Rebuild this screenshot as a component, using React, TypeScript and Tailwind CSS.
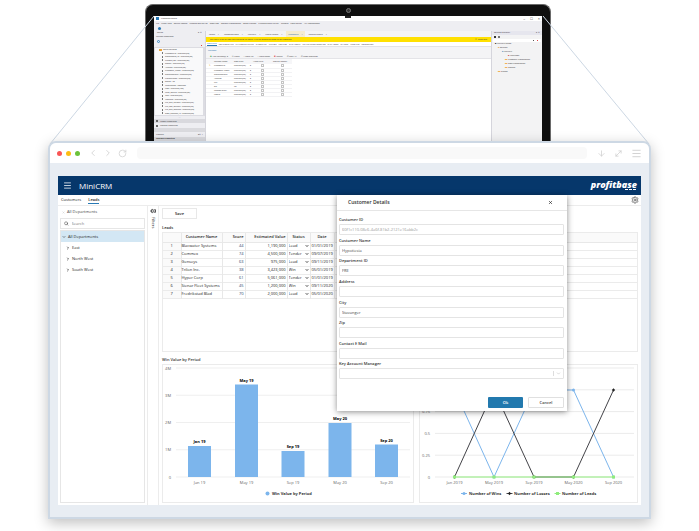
import React from "react";
import { Menu, Search, X, ChevronDown, ChevronLeft, ChevronRight, RotateCw, ArrowDown, Settings, Pin, MoveDiagonal } from "lucide-react";

const menuItems = ["File", "Client Apps", "Source Control", "Themes and Styling", "Data Flow", "Storage Management", "Smart Process", "Python/Extend Library", "Reports", "Local/Server", "API Management"];
const editorTabs = ["Forms", "InfoObject.wms", "MiniCRM", "Users/Actions", "Customers", "Logging Details"];
const subTabs = ["COLUMNS", "RELATIONSHIPS", "CHANGE TRACKING", "TIMESTAMP", "CUR SET", "POLICIES", "DATA SETUP", "TRANSACTION/STORAGE", "DATA POOL", "SHARED", "INDEXING", "REFERENCES"];
const treeColumns = ["CustomerID : nvarchar(50)", "Department_ID : nvarchar(50)", "Created_On : nvarchar(50)", "Report : nvarchar(50)", "Account : nvarchar(50)", "Customer_Name : nvarchar(50)", "DepartmentID : nvarchar(50)", "ProjectName : nvarchar(50)", "Status : int", "InvoiceDate : datetime", "Path : nvarchar(100)", "Lead_Source : nvarchar(50)", "Icon : nvarchar(50)", "Modified : nvarchar(50)", "File_one_column : nvarchar(50)", "File_two_column : nvarchar(50)", "File_one_address : nvarchar(50)", "Data_Connect_Id : nvarchar(50)"];
const dbRows = [["CustomerID", "nvarchar(50)"], ["Customer Name", "nvarchar(50)"], ["DepartmentID", "nvarchar(50)"], ["Address", "nvarchar(50)"], ["City", "nvarchar(50)"], ["Zip", "int"], ["Contact EMail", "nvarchar(50)"], ["KamID", "nvarchar(50)"]];

const leads = [
  ["1", "Blacwater Systems", "44", "1,190,000", "Lead", "01/01/2019"],
  ["2", "Commex", "74", "4,500,000", "Tender", "09/07/2019"],
  ["3", "Genseys", "63", "975,000", "Lead", "09/11/2019"],
  ["4", "Trilon Inc.", "38", "3,423,000", "Win", "05/01/2019"],
  ["5", "Hyper Corp", "61", "5,061,000", "Tender", "01/01/2019"],
  ["6", "Sienar Fleet Systems", "45", "1,200,000", "Win", "09/11/2020"],
  ["7", "Fredrikstad Blad", "70", "2,000,000", "Lead", "05/01/2020"],
];

const fields = [
  { id: "customer-id", label: "Customer ID", value: "60f1c110-08e6-4a6f-81b2-2121e16abb2c", disabled: true },
  { id: "customer-name", label: "Customer Name", value: "Hypotiesia" },
  { id: "department-id", label: "Department ID", value: "FRE" },
  { id: "address", label: "Address", value: "" },
  { id: "city", label: "City", value: "Stavanger" },
  { id: "zip", label: "Zip", value: "" },
  { id: "email", label: "Contact E Mail", value: "" },
];

function Laptop() {
  return (
    <div className="ml-[145px] mr-[148px] mt-1 flex h-[137px] flex-col overflow-hidden rounded-t-lg border-x border-t border-[#6a6a6a] bg-[#0f0f0f] px-2">
      <div className="flex h-[11px] shrink-0 items-center justify-center">
        <span className="size-[5px] rounded-full border border-[#777] bg-[#333]" />
      </div>
      <div className="relative flex min-h-0 flex-1 flex-col bg-[#eeeef2] text-[2px] leading-[3px] text-[#333]">
        <span className="absolute left-1/2 top-0 h-[2px] w-[6px] -translate-x-1/2 bg-[#222]" />
        <div className="flex h-[5px] shrink-0 items-center gap-[2px] bg-white px-[2px]">
          <span className="size-[3px] bg-[#2879b5]" />
          <span className="flex-1">Profitbase Studio</span>
          <span className="flex gap-[5px] text-[4px]"><i className="not-italic">–</i><i className="not-italic">□</i><i className="not-italic">×</i></span>
        </div>
        <nav className="flex h-[4px] shrink-0 items-center gap-[2px] px-[2px]">
          {menuItems.map((m) => <a key={m} href="#" className="whitespace-nowrap">{m}</a>)}
        </nav>
        <div className="flex h-[6px] shrink-0 items-center px-1"><span className="size-[3px] rounded-full bg-[#2879b5]" /></div>
        <div className="flex min-h-0 flex-1">
          <aside className="flex w-[51px] shrink-0 flex-col">
            <div className="flex h-[4px] justify-between px-[3px]"><span>Tables</span><span>▾ ⊟</span></div>
            <div className="h-[4px] px-[2px]">Column Templates</div>
            <div className="flex h-[4px] items-center px-[3px]"><span className="size-[3px] rounded-full border border-[#3b87c4]" /></div>
            <div className="flex h-[4px] items-center justify-end px-[3px]"><span className="size-px bg-[#d44]" /></div>
            <div className="flex h-[69px] shrink-0 flex-col border border-r-2 border-[#dcdce2] bg-[#f9f9fa]">
              <div className="flex flex-1 items-center gap-px pl-[4px]"><span className="h-[2px] w-[3px] bg-[#e8a33d]" />Table Columns</div>
              {treeColumns.map((t) => (
                <div key={t} className="flex flex-1 items-center gap-[2px] pl-[7px]"><span className="h-[2px] w-px bg-[#777]" />{t}</div>
              ))}
            </div>
            <div className="h-[3px] text-center">....</div>
            <div className="flex h-[4px] items-center gap-[2px] bg-[#d9d9de] px-[2px]"><span className="size-[2px] bg-[#666]" />Master Templates</div>
            <div className="flex h-[5px] items-center gap-[2px] px-[2px]"><span className="size-[2px] bg-[#666]" />Package Resources</div>
            <div className="h-[4px] bg-[#dadade]" />
            <div className="flex h-[5px] items-center justify-between px-[2px]"><span>Property</span><span>▾ ⊟ ×</span></div>
            <div className="h-[4px] bg-[#dadade] px-[2px] font-bold">Column Properties</div>
          </aside>
          <section className="flex min-w-0 flex-1 flex-col border-x border-[#d5d5dc] bg-[#f4f4f6]">
            <div className="flex h-[6px] shrink-0 items-center gap-[3px] pl-[2px]">
              {editorTabs.map((t) => (
                <span key={t} className={t === "Customers" ? "flex h-full items-center gap-[3px] bg-[#f5ecd0] px-[2px] text-[#1668a7]" : "flex items-center gap-[3px] px-px"}>{t}<i className="not-italic">×</i></span>
              ))}
            </div>
            <div className="flex h-[5px] shrink-0 items-center justify-between bg-[#ffe000] px-1"><span>The table is out of date and needs to be saved. Click to update the state of the database</span><span>↧ Check out</span></div>
            <div className="flex h-[5px] shrink-0 items-center gap-[2px] border-b border-[#e2e2e6] bg-white px-px">
              {subTabs.map((t) => <span key={t} className={t === "COLUMNS" ? "border-b border-[#2879b5] text-[#1668a7]" : ""}>{t}</span>)}
            </div>
            <div className="flex h-[7px] shrink-0 items-center px-[2px] text-[#1668a7]">Columns</div>
            <div className="flex h-[5px] shrink-0 items-center gap-[4px] border-b border-[#e4e4e8] px-[4px]">
              <span><b className="text-[#2a9b3e]">✚</b> Add Column(s) ▾</span><span>⟳ Clone</span><span>↑ Move Up</span><span>↓ Move Down</span><span><b className="text-[#d33]">✖</b> Delete</span><span>⎘ Copy All</span><span>⎘ Paste Definition</span>
            </div>
            <div className="min-h-0 flex-1 bg-white">
              <table className="w-[86px] table-fixed border-collapse text-left">
                <thead>
                  <tr className="h-[5px] bg-[#f6f6f8]"><th className="w-[8px] p-0" /><th className="w-[20px] p-0 font-normal">Column Name</th><th className="w-[19px] p-0 font-normal">Data Type</th><th className="w-[20px] p-0 font-normal">Allow Nulls</th><th className="p-0 font-normal">Replica Identity</th></tr>
                </thead>
                <tbody>
                  {dbRows.map(([n, t], i) => (
                    <tr key={n} className="h-[4px] border-b border-[#f2f2f4]">
                      <td className="p-0 pl-[3px] text-[#d99a2b]">{i === 0 ? "✎" : ""}</td>
                      <td className="p-0">{n}</td>
                      <td className="p-0"><span className="flex justify-between pr-[2px]"><span>{t}</span><span>▾</span></span></td>
                      <td className="p-0"><span className="ml-[8px] block size-[3px] border border-[#c4c4c4]" /></td>
                      <td className="p-0"><span className="ml-[8px] block size-[3px] border border-[#c4c4c4]" /></td>
                    </tr>
                  ))}
                </tbody>
              </table>
            </div>
          </section>
          <aside className="flex w-[50px] shrink-0 flex-col bg-[#f3f3f4]">
            <div className="flex h-[4px] justify-between bg-[#e6e6ee] px-[2px]"><span>Solution Explorer</span><span>▾ ⊟</span></div>
            <div className="flex h-[4px] items-center gap-[2px] px-[2px]"><span className="size-[2px] bg-[#333]" /><span className="size-[2px] bg-[#777]" /></div>
            <div className="mx-px flex h-[3px] items-center justify-end gap-[3px] bg-white px-[3px]"><span className="size-px bg-[#555]" /><span className="size-px bg-[#d44]" /></div>
            <div className="flex flex-col leading-[4px]">
              <span className="pl-[3px]"><b className="text-black">■</b> MiniCRM Demo</span>
              <span className="pl-[6px]"><b className="text-[#e8a33d]">■</b> Solution</span>
              <span className="pl-[10px]"><b className="text-[#4a90c8]">■</b> MiniCRM</span>
              <span className="pl-[16px]"><b className="text-[#c33]">■</b> Workbook</span>
              <span className="pl-[13px]"><b className="text-[#f09a1a]">■■</b> Customer Management</span>
              <span className="pl-[13px]"><b className="text-[#f09a1a]">■■</b> Data Management</span>
              <span className="pl-[13px]"><b className="text-[#f09a1a]">■■</b> Reports</span>
              <span className="pl-[6px]"><b className="text-[#f09a1a]">■■</b> System</span>
            </div>
          </aside>
        </div>
      </div>
    </div>
  );
}

function BrowserBar() {
  return (
    <div className="flex h-5 items-center rounded-t-md bg-white px-[7px]">
      <span className="size-[5px] rounded-full bg-[#f95555]" />
      <span className="ml-1 size-[5px] rounded-full bg-[#fdbd12]" />
      <span className="ml-1 size-[5px] rounded-full bg-[#6cc23a]" />
      <div className="ml-[8px] flex items-center gap-[5px] text-[#d0d0d0]">
        <button aria-label="Back"><ChevronLeft size={10} strokeWidth={2} /></button>
        <button aria-label="Forward"><ChevronRight size={10} strokeWidth={2} /></button>
        <button aria-label="Reload"><RotateCw size={9} strokeWidth={2} /></button>
      </div>
      <input aria-label="Address bar" className="mx-[10px] h-3 min-w-0 flex-1 rounded-sm bg-[#f9f9f9]" />
      <div className="flex items-center gap-[8px] text-[#cfcfcf]">
        <button aria-label="Download"><ArrowDown size={9} strokeWidth={2} /></button>
        <button aria-label="Expand"><MoveDiagonal size={9} strokeWidth={2} /></button>
        <button aria-label="Menu"><Menu size={11} strokeWidth={2} /></button>
      </div>
    </div>
  );
}

function Sidebar() {
  return (
    <aside className="flex w-[90px] shrink-0 flex-col border-r border-[#ececec] px-[2px] pb-[2px]">
      <div className="flex h-[12px] items-center gap-[2px] pl-[2px] text-[#444]"><X size={3} className="text-[#aaa]" />All Departments</div>
      <label className="flex h-[11px] items-center gap-[3px] border border-[#e6e6e6] px-[3px]">
        <Search size={5} strokeWidth={3} className="text-[#555]" />
        <input placeholder="Search" className="w-full min-w-0 outline-none placeholder:text-[#777]" />
      </label>
      <ul className="mt-px flex-1 border border-[#e6e6e6]">
        <li className="flex h-[11px] items-center gap-[2px] bg-[#d3e7f4] pl-px"><ChevronDown size={4} strokeWidth={3} />All Departments</li>
        {["East", "North West", "South West"].map((d) => (
          <li key={d} className="flex h-[11px] items-center gap-[2px] pl-[5px]"><ChevronRight size={4} strokeWidth={4} />{d}</li>
        ))}
      </ul>
    </aside>
  );
}

function LeadsTable() {
  return (
    <div className="h-[120px] border border-[#ebebeb]">
      <table className="w-full table-fixed border-collapse">
        <thead>
          <tr className="h-[9px] border-b border-[#e8e8e8] bg-[#fafafa]">
            <th className="w-[18px] border-r border-[#e8e8e8] p-0" />
            <th className="w-[41px] border-r border-[#e8e8e8] p-0 font-semibold">Customer Name</th>
            <th className="w-[23px] border-r border-[#e8e8e8] p-0 pr-px text-right font-semibold">Score</th>
            <th className="w-[42px] border-r border-[#e8e8e8] p-0 pr-px text-right font-semibold">Estimated Value</th>
            <th className="w-[23px] border-r border-[#e8e8e8] p-0 font-semibold">Status</th>
            <th className="w-[24px] border-r border-[#e8e8e8] p-0 font-semibold">Date</th>
            <th className="p-0" />
          </tr>
        </thead>
        <tbody>
          {leads.map(([n, name, score, value, status, date]) => (
            <tr key={n} className="h-[8px] border-b border-[#ebebeb]">
              <td className="border-r border-[#e8e8e8] bg-[#fafafa] p-0 text-center">{n}</td>
              <td className="whitespace-nowrap border-r border-[#e8e8e8] p-0">{name}</td>
              <td className="border-r border-[#e8e8e8] p-0 pr-px text-right text-[#2b3f6c]">{score}</td>
              <td className="border-r border-[#e8e8e8] p-0 pr-px text-right">{value}</td>
              <td className="border-r border-[#e8e8e8] p-0">
                <span className="flex items-center pl-px pr-px">
                  <select aria-label={`Status of ${name}`} defaultValue={status} className="min-w-0 flex-1 appearance-none">
                    <option>Lead</option>
                    <option>Tender</option>
                    <option>Win</option>
                  </select>
                  <ChevronDown size={4} strokeWidth={5} className="shrink-0" />
                </span>
              </td>
              <td className="border-r border-[#e8e8e8] p-0 pl-px">{date}</td>
              <td className="p-0" />
            </tr>
          ))}
        </tbody>
      </table>
    </div>
  );
}

const bars = [
  { label: "Jan 19", x: 36.5, top: 81 },
  { label: "May 19", x: 83.5, top: 19.5 },
  { label: "Sep 19", x: 130, top: 86 },
  { label: "May 20", x: 177, top: 58 },
  { label: "Sep 20", x: 223.5, top: 79.5 },
];

function BarChart() {
  return (
    <svg viewBox="0 0 250 137" className="block w-full text-[4px]" role="img" aria-label="Win Value by Period">
      {["4M", "3M", "2M", "1M", "0"].map((t, i) => (
        <g key={t}>
          <line x1="13" x2="247" y1={3 + i * 27.25} y2={3 + i * 27.25} stroke="#efefef" strokeWidth="1" />
          <text x="8" y={4.5 + i * 27.25} textAnchor="end" fill="#666">{t}</text>
        </g>
      ))}
      {bars.map((b) => (
        <g key={b.label}>
          <rect x={b.x - 11.5} y={b.top} width="23" height={112 - b.top} fill="#7cb5ec" />
          <text x={b.x} y={b.top - 3} textAnchor="middle" fontWeight="700" fill="#000">{b.label}</text>
          <text x={b.x} y="118.5" textAnchor="middle" fill="#666">{b.label}</text>
        </g>
      ))}
      <circle cx="104.5" cy="128.5" r="2" fill="#7cb5ec" />
      <text x="109" y="130" fontWeight="700" fill="#333">Win Value by Period</text>
    </svg>
  );
}

const xs = [34.5, 74, 114, 153.5, 193.5];
function LineChart() {
  const wins = [25, 112, 25, 25, 112];
  const losses = [112, 25, 112, 112, 25];
  const pts = (ys: number[]) => xs.map((x, i) => `${x},${ys[i]}`).join(" ");
  return (
    <svg viewBox="0 0 217 137" className="block w-full text-[4px]" role="img" aria-label="Number of wins, losses and leads">
      {["1.25", "1", "0.75", "0.5", "0.25", "0"].map((t, i) => (
        <g key={t}>
          <line x1="15" x2="214" y1={3 + i * 21.8} y2={3 + i * 21.8} stroke="#ebebeb" />
          <text x="10" y={4.5 + i * 21.8} textAnchor="end" fill="#666">{t}</text>
        </g>
      ))}
      <polyline points={pts(wins)} fill="none" stroke="#7cb5ec" />
      <polyline points={pts(losses)} fill="none" stroke="#434348" />
      <polyline points={`${xs[0]},112 ${xs[4]},112`} fill="none" stroke="#90ed7d" />
      {xs.map((x, i) => (
        <g key={x}>
          <circle cx={x} cy={wins[i]} r="1.5" fill="#7cb5ec" />
          <path d={`M${x} ${losses[i] - 1.8}l1.6 1.8l-1.6 1.8l-1.6 -1.8z`} fill="#222" />
          <rect x={x - 1.5} y="110.5" width="3" height="3" fill="#90ed7d" />
          <text x={x} y="118.5" textAnchor="middle" fill="#666">{["Jan 2019", "May 2019", "Sep 2019", "May 2020", "Sep 2020"][i]}</text>
        </g>
      ))}
      <g fontWeight="700" fill="#333">
        <path d="M41 128.500h6" stroke="#7cb5ec" /><circle cx="44" cy="128.500" r="1.500" fill="#7cb5ec" /><text x="49" y="130">Number of Wins</text>
        <path d="M86.500 128.500h6" stroke="#434348" /><path d="M89.500 126.700l1.600 1.800l-1.600 1.800l-1.600 -1.800z" fill="#222" /><text x="94" y="130">Number of Losses</text>
        <path d="M134.500 128.500h6" stroke="#90ed7d" /><rect x="136" y="127" width="3" height="3" fill="#90ed7d" /><text x="142" y="130">Number of Leads</text>
      </g>
    </svg>
  );
}

function CustomerDialog() {
  return (
    <div role="dialog" aria-labelledby="dialog-title" className="absolute right-[74px] top-[19px] w-[230px] bg-white shadow-[0_1px_6px_rgba(0,0,0,0.45)]">
      <header className="flex h-4 items-center justify-between border-b border-[#e6e6e6] pl-[11px] pr-[14px]">
        <h2 id="dialog-title" className="text-[5px] font-semibold leading-[7px] text-[#333]">Customer Details</h2>
        <button aria-label="Close"><X size={5} strokeWidth={3} /></button>
      </header>
      <form className="pl-[2px] pr-[3px] pt-[5px]" onSubmit={(e) => e.preventDefault()}>
        <div className="grid h-[165px] auto-rows-fr">
          {fields.map((f) => (
            <div key={f.id}>
              <label htmlFor={f.id} className="block h-[8px] font-semibold leading-[8px] text-[#333]">{f.label}</label>
              <input id={f.id} defaultValue={f.value} disabled={f.disabled} className="block h-[11px] w-full rounded-[1px] border border-[#e4e4e4] px-[2px] text-[#444] disabled:text-[#999]" />
            </div>
          ))}
          <div>
            <label htmlFor="manager" className="block h-[8px] font-semibold leading-[8px] text-[#333]">Key Account Manager</label>
            <div className="flex h-[11px] items-center rounded-[1px] border border-[#e4e4e4] pr-[2px]">
              <select id="manager" className="h-full min-w-0 flex-1 appearance-none" />
              <span className="mr-[2px] h-[5px] w-px bg-[#ddd]" />
              <ChevronDown size={5} className="text-[#aaa]" />
            </div>
          </div>
        </div>
        <div className="flex justify-end gap-[5px] pb-[3px] pt-4">
          <button className="h-[11px] w-[35px] rounded-[1px] bg-[#2279ae] font-semibold text-white">Ok</button>
          <button className="h-[11px] w-[36px] rounded-[1px] border border-[#e0e0e0] font-semibold text-[#444]">Cancel</button>
        </div>
      </form>
    </div>
  );
}

function CrmApp() {
  return (
    <div className="relative bg-white text-[4px] leading-[6px] text-[#222]">
      <header className="flex h-[19px] items-center bg-[#06376b] pl-[5px] pr-[4px] text-white">
        <button aria-label="Open menu"><Menu size={9} strokeWidth={2} /></button>
        <h1 className="ml-[7px] flex-1 text-[8px] leading-[10px]">MiniCRM</h1>
        <div className="flex flex-col items-end pb-px">
          <span className="text-[9px] font-extrabold italic leading-[9px]">profitbase</span>
          <span className="flex gap-px pr-px"><i className="h-px w-[3px] bg-white" /><i className="h-px w-[3px] bg-white" /><i className="h-px w-[3px] bg-white" /></span>
        </div>
      </header>
      <nav className="flex h-[11px] items-center gap-[7px] border-b border-[#ececec] pl-[3px] pr-[2px]">
        <a href="#" className="h-[7px]">Customers</a>
        <a href="#" className="h-[7px] border-b border-[#2879b5] font-semibold">Leads</a>
        <button aria-label="Settings" className="ml-auto"><Settings size={8} strokeWidth={3} className="text-[#777]" /></button>
      </nav>
      <div className="flex">
        <Sidebar />
        <div className="flex w-[11px] shrink-0 flex-col items-center gap-[3px] border-r border-[#ececec] pt-[2px]">
          <Pin size={6} strokeWidth={3} className="rotate-90" />
          <span className="leading-[8px] [writing-mode:vertical-rl]">Filters</span>
        </div>
        <main className="flex min-w-0 flex-1 flex-col px-[3px] pb-[2px] pt-[2px]">
          <button className="h-[11px] w-[35px] border border-[#e8e8e8] font-semibold">Save</button>
          <h2 className="mt-[6px] h-[7px] font-semibold">Leads</h2>
          <LeadsTable />
          <div className="grid grid-cols-[252fr_219fr] gap-x-[5px] pt-[5px]">
            <h2 className="col-span-2 h-[7px] font-semibold text-[#333]">Win Value by Period</h2>
            <div className="border border-[#ebebeb]"><BarChart /></div>
            <div className="border border-[#ebebeb]"><LineChart /></div>
          </div>
        </main>
      </div>
      <CustomerDialog />
    </div>
  );
}

export default function App() {
  return (
    <div className="relative flex min-h-screen flex-col bg-white font-['Open_Sans','Noto_Sans',sans-serif]">
      <Laptop />
      <svg className="absolute left-0 top-0 h-[148px] w-full" viewBox="0 0 699 148" preserveAspectRatio="none" aria-hidden="true">
        <path d="M154 16L50 144M543 16L649 144" fill="none" stroke="#cdd8e4" strokeWidth="1" />
      </svg>
      <div className="relative mx-12 rounded-t-lg border-2 border-[#cdd8e4] bg-[#e8edf3] shadow-[0_4px_14px_rgba(0,0,0,0.25)]">
        <BrowserBar />
        <div className="px-2 pb-3 pt-[13px]"><CrmApp /></div>
      </div>
    </div>
  );
}
